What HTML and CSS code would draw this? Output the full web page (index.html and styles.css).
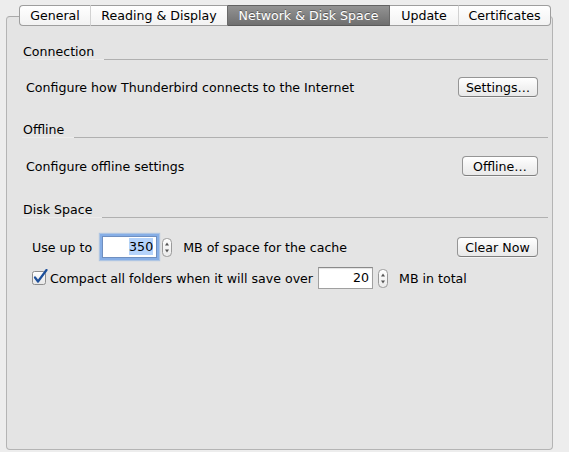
FILE: index.html
```html
<!DOCTYPE html>
<html>
<head>
<meta charset="utf-8">
<link rel="stylesheet" href="styles.css">
</head>
<body>
<div class="window">
  <div class="tabs">
    <div class="tab tab-general">General</div>
    <div class="tab tab-reading">Reading &amp; Display</div>
    <div class="tab tab-network selected">Network &amp; Disk Space</div>
    <div class="tab tab-update">Update</div>
    <div class="tab tab-certs">Certificates</div>
  </div>
  <div class="panel">
    <div class="group-head first"><span class="caption">Connection</span><span class="rule"></span></div>
    <div class="row row-a">
      <span class="label">Configure how Thunderbird connects to the Internet</span>
      <button class="btn btn-settings">Settings…</button>
    </div>

    <div class="group-head second"><span class="caption">Offline</span><span class="rule"></span></div>
    <div class="row row-b">
      <span class="label">Configure offline settings</span>
      <button class="btn btn-offline">Offline…</button>
    </div>

    <div class="group-head third"><span class="caption">Disk Space</span><span class="rule"></span></div>
    <div class="row row-cache">
      <span class="label">Use up to</span>
      <span class="field focused"><span class="sel">350</span></span>
      <svg class="spin" width="10" height="19" viewBox="0 0 10 19">
        <defs><linearGradient id="sg" x1="0" y1="0" x2="0" y2="1"><stop offset="0" stop-color="#ffffff"/><stop offset="1" stop-color="#eaeaea"/></linearGradient></defs>
        <rect x="0.5" y="0.5" width="9" height="18" rx="4" ry="4" fill="url(#sg)" stroke="#9a9a9a"/>
        <path d="M3 7.5 L5 4.5 L7 7.5 Z" fill="#555"/>
        <path d="M3 11.5 L5 14.5 L7 11.5 Z" fill="#555"/>
      </svg>
      <span class="label after">MB of space for the cache</span>
      <button class="btn btn-clear">Clear Now</button>
    </div>
    <div class="row row-compact">
      <svg class="check" width="16" height="16" viewBox="0 0 16 16">
        <defs><linearGradient id="cg" x1="0" y1="0" x2="0" y2="1"><stop offset="0" stop-color="#ffffff"/><stop offset="1" stop-color="#e6e6e6"/></linearGradient></defs>
        <rect x="0.5" y="2.5" width="13" height="13" rx="2" ry="2" fill="url(#cg)" stroke="#8e8e8e"/>
        <path d="M3 8.5 L6 12.5 L14.5 1" fill="none" stroke="#1d4f9a" stroke-width="2.2" stroke-linecap="round" stroke-linejoin="round"/>
      </svg>
      <span class="label">Compact all folders when it will save over</span>
      <span class="field">20</span>
      <svg class="spin" width="10" height="19" viewBox="0 0 10 19">
        <rect x="0.5" y="0.5" width="9" height="18" rx="4" ry="4" fill="url(#sg)" stroke="#9a9a9a"/>
        <path d="M3 7.5 L5 4.5 L7 7.5 Z" fill="#555"/>
        <path d="M3 11.5 L5 14.5 L7 11.5 Z" fill="#555"/>
      </svg>
      <span class="label after">MB in total</span>
    </div>
  </div>
</div>
</body>
</html>
```
FILE: styles.css
```css
html, body {
  margin: 0;
  padding: 0;
  background: #ededed;
}

body {
  font-family: "DejaVu Sans", "Liberation Sans", sans-serif;
  font-size: 12.6px;
  color: #000;
}

.window {
  width: 569px;
  height: 452px;
  box-sizing: border-box;
  padding: 5px 0 0 6px;
}

.tabs {
  display: flex;
  margin-left: 13px;
  height: 21px;
  margin-bottom: -10px;
  position: relative;
  z-index: 1;
}

.tab {
  box-sizing: border-box;
  height: 21px;
  line-height: 19px;
  text-align: center;
  background: linear-gradient(#ffffff, #f2f2f2);
  border-top: 1px solid #9e9e9e;
  border-bottom: 1px solid #9e9e9e;
  border-right: 1px solid #d2d2d2;
  white-space: nowrap;
}

.tab-general {
  width: 72px;
  border-left: 1px solid #9e9e9e;
  border-radius: 4px 0 0 4px;
}
.tab-reading { width: 137px; border-right-color: #6a6a6a; }
.tab-network { width: 162px; }
.tab-update { width: 69px; }
.tab-certs {
  width: 92px;
  border-right: 1px solid #9e9e9e;
  border-radius: 0 4px 4px 0;
}

.tab.selected {
  background: linear-gradient(#939393, #6f6f6f);
  color: #fff;
  border-top-color: #626262;
  border-bottom-color: #5a5a5a;
  border-right-color: #6a6a6a;
  text-shadow: 0 -1px 0 rgba(0,0,0,0.35);
}

.panel {
  box-sizing: border-box;
  width: 547px;
  height: 434px;
  border: 1px solid #b4b4b4;
  border-top-color: #a9a9a9;
  border-radius: 4px;
  background: #e4e4e4;
  padding: 27px 4px 0 15px;
}

.group-head {
  display: flex;
  height: 16px;
}
.group-head.second { margin-top: 25px; }
.group-head.third { margin-top: 26px; }

.caption {
  line-height: 15px;
  padding: 0 10px 0 1px;
  border-bottom: 1px solid #ececec;
  height: 15px;
}

.rule {
  flex: 1;
  border-bottom: 1px solid #b0b0b0;
  height: 15px;
}

.row {
  display: flex;
  align-items: center;
  height: 20px;
  padding: 0 10px 0 4px;
}
.row-a { margin-top: 17px; }
.row-b { margin-top: 18px; }
.row-cache {
  margin-top: 17px;
  height: 24px;
  padding-left: 10px;
}
.row-compact {
  margin-top: 8px;
  height: 22px;
  padding-left: 10px;
}

.label { white-space: nowrap; }
.label.after { margin-left: 11px; }

.btn {
  margin-left: auto;
  box-sizing: border-box;
  height: 20px;
  padding: 0;
  font: inherit;
  color: #000;
  background: linear-gradient(#ffffff, #f3f3f3 50%, #e9e9e9);
  border: 1px solid #959595;
  border-bottom-color: #7e7e7e;
  border-radius: 4px;
  box-shadow: 0 1px 0 rgba(255,255,255,0.6);
}
.btn-settings { width: 80px; }
.btn-offline { width: 76px; }
.btn-clear { width: 81px; }

.field {
  box-sizing: border-box;
  width: 55px;
  height: 22px;
  line-height: 20px;
  text-align: right;
  padding-right: 3px;
  background: #fff;
  border: 1px solid #a0a0a0;
  border-top-color: #8a8a8a;
  box-shadow: inset 0 1px 1px rgba(0,0,0,0.12);
  margin-left: 5px;
}
.row-cache .field {
  margin-left: 10px;
}
.field.focused {
  border-color: #6f8fc0;
  box-shadow: 0 0 0 2px #86aee6, 0 0 1px 3px rgba(120,165,225,0.5);
}

.sel {
  background: #b5d3fb;
  padding: 1px 0;
}

.spin {
  display: block;
  margin-left: 5px;
  flex: none;
}

.check {
  display: block;
  flex: none;
  margin-right: 2px;
  margin-top: -2px;
}
```
